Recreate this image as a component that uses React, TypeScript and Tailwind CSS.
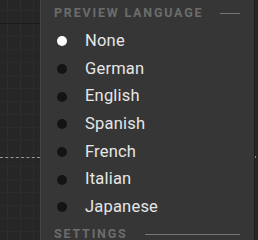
import React from 'react';

const languages = ['None', 'German', 'English', 'Spanish', 'French', 'Italian', 'Japanese'];

function SectionHeader({ label, lineClass }: { label: string; lineClass: string }) {
  return (
    <div className="flex items-center h-[16px] pl-[13px] pr-[14px]">
      <span className="text-[12.5px] font-bold tracking-[1.8px] text-[#6c6c6c] leading-none">
        {label}
      </span>
      <div className={`h-px bg-[#767676] ${lineClass}`} />
    </div>
  );
}

export default function App() {
  const selected = 'None';

  return (
    <div className="flex w-[258px] h-[240px] overflow-hidden bg-[#262626] font-['Roboto',sans-serif]">
      {/* canvas strip */}
      <div className="w-[40px] shrink-0 flex flex-col bg-[#262626] bg-[linear-gradient(to_right,#2d2d2d_1px,transparent_1px),linear-gradient(to_bottom,#2b2b2b_1px,transparent_1px)] bg-[size:13px_13px] bg-[position:7px_10px]">
        <div className="h-[23px]" />
        <div className="h-px bg-[#1b1b1b]" />
        <div className="h-[133px]" />
        <div className="border-t border-dashed border-[#9a9a9a]" />
      </div>

      {/* panel */}
      <div className="w-[215px] shrink-0 flex flex-col bg-[#363636] border-l border-[#454545] border-r border-r-[#1e1e1e] pt-[7px]">
        <SectionHeader label="PREVIEW LANGUAGE" lineClass="ml-auto w-[20px]" />
        <div className="mt-[8px] flex flex-col">
          {languages.map(lang => (
            <div key={lang} className="flex items-center h-[27.67px] pl-[16px]">
              <span
                className={`w-[10px] h-[10px] rounded-full ${lang === selected ? 'bg-white' : 'bg-[#141414]'}`}
              />
              <span className="ml-[18px] text-[16.5px] text-[#e6e6e6] tracking-[0.2px] leading-none">
                {lang}
              </span>
            </div>
          ))}
        </div>
        <div className="mt-[5px]">
          <SectionHeader label="SETTINGS" lineClass="ml-[17px] flex-1" />
        </div>
      </div>

      <div className="flex-1 flex flex-col">
        <div className="h-[156px]" />
        <div className="w-px h-[2px] bg-[#8a8a8a]" />
      </div>
    </div>
  );
}
